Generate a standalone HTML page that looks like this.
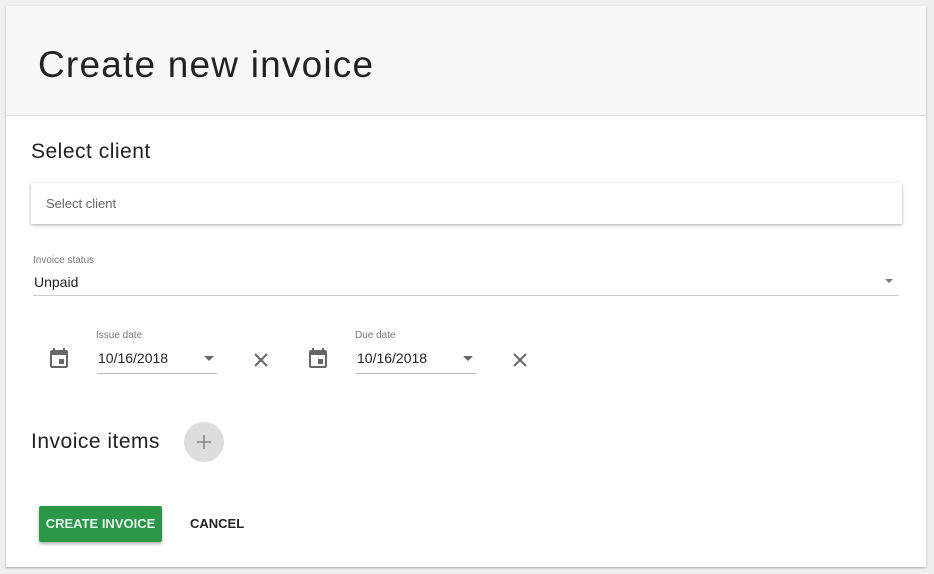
<!DOCTYPE html>
<html><head><style>
*{box-sizing:border-box;margin:0;padding:0}
body{width:934px;height:574px;background:#efefef;font-family:"Liberation Sans",sans-serif;color:#222;position:relative;overflow:hidden}
.card{position:absolute;left:6px;top:6px;width:920px;height:561px;background:#fff;box-shadow:0 1px 2px rgba(0,0,0,.3)}
.hdr{position:absolute;left:0;top:0;width:920px;height:110px;background:#f7f7f7;border-bottom:1px solid #ddd}
.abs{position:absolute}
</style></head><body>
<div class="card">
<div class="hdr"></div>
<div class="abs" style="left:32px;top:38px;font-size:37px;color:#222;letter-spacing:1.2px">Create new invoice</div>
<div class="abs" style="left:25px;top:134px;font-size:21px;color:#222;letter-spacing:0.5px">Select client</div>
<div class="abs" style="left:25px;top:177px;width:871px;height:41px;background:#fff;box-shadow:0 1px 3px rgba(0,0,0,.35)"></div>
<div class="abs" style="left:40px;top:190px;font-size:13px;color:#666">Select client</div>
<div class="abs" style="left:27px;top:249px;font-size:10px;color:#777">Invoice status</div>
<div class="abs" style="left:28px;top:268px;font-size:14px;color:#222">Unpaid</div>
<div class="abs" style="left:27px;top:289px;width:866px;height:1px;background:#ccc"></div>
<div class="abs" style="left:879px;top:273px;border-left:4px solid transparent;border-right:4px solid transparent;border-top:4px solid #777"></div>

<svg class="abs" style="left:41px;top:341px" width="24" height="24" viewBox="0 0 24 24"><path fill="#666" d="M17 12h-5v5h5v-5zM16 1v2H8V1H6v2H5c-1.1 0-2 .9-2 2v14c0 1.1.9 2 2 2h14c1.1 0 2-.9 2-2V5c0-1.1-.9-2-2-2h-1V1h-2zm3 18H5V8h14v11z"/></svg>
<div class="abs" style="left:90px;top:324px;font-size:10px;color:#777">Issue date</div>
<div class="abs" style="left:92px;top:344px;font-size:14px">10/16/2018</div>
<div class="abs" style="left:91px;top:367px;width:120px;height:1px;background:#bbb"></div>
<div class="abs" style="left:198px;top:350px;border-left:5px solid transparent;border-right:5px solid transparent;border-top:5px solid #666"></div>
<svg class="abs" style="left:243px;top:342px" width="24" height="24" viewBox="0 0 24 24"><path stroke="#666" stroke-width="2" d="M6 6l12 12M18 6L6 18"/></svg>

<svg class="abs" style="left:300px;top:341px" width="24" height="24" viewBox="0 0 24 24"><path fill="#666" d="M17 12h-5v5h5v-5zM16 1v2H8V1H6v2H5c-1.1 0-2 .9-2 2v14c0 1.1.9 2 2 2h14c1.1 0 2-.9 2-2V5c0-1.1-.9-2-2-2h-1V1h-2zm3 18H5V8h14v11z"/></svg>
<div class="abs" style="left:349px;top:324px;font-size:10px;color:#777">Due date</div>
<div class="abs" style="left:351px;top:344px;font-size:14px">10/16/2018</div>
<div class="abs" style="left:350px;top:367px;width:120px;height:1px;background:#bbb"></div>
<div class="abs" style="left:457px;top:350px;border-left:5px solid transparent;border-right:5px solid transparent;border-top:5px solid #666"></div>
<svg class="abs" style="left:502px;top:342px" width="24" height="24" viewBox="0 0 24 24"><path stroke="#666" stroke-width="2" d="M6 6l12 12M18 6L6 18"/></svg>

<div class="abs" style="left:25px;top:424px;font-size:21px;color:#222;letter-spacing:0.5px">Invoice items</div>
<div class="abs" style="left:178px;top:416px;width:40px;height:40px;border-radius:50%;background:#ddd"></div>
<svg class="abs" style="left:186px;top:424px" width="24" height="24" viewBox="0 0 24 24"><path stroke="#888" stroke-width="1.6" d="M12 5v14M5 12h14"/></svg>

<div class="abs" style="left:33px;top:500px;width:123px;height:36px;background:#2a9647;border-radius:2px;box-shadow:0 2px 3px rgba(0,0,0,.3);color:#e8f5ec;font-size:13px;font-weight:bold;text-align:center;line-height:36px">CREATE INVOICE</div>
<div class="abs" style="left:184px;top:510px;font-size:13px;font-weight:bold;color:#222">CANCEL</div>
</div>
</body></html>
